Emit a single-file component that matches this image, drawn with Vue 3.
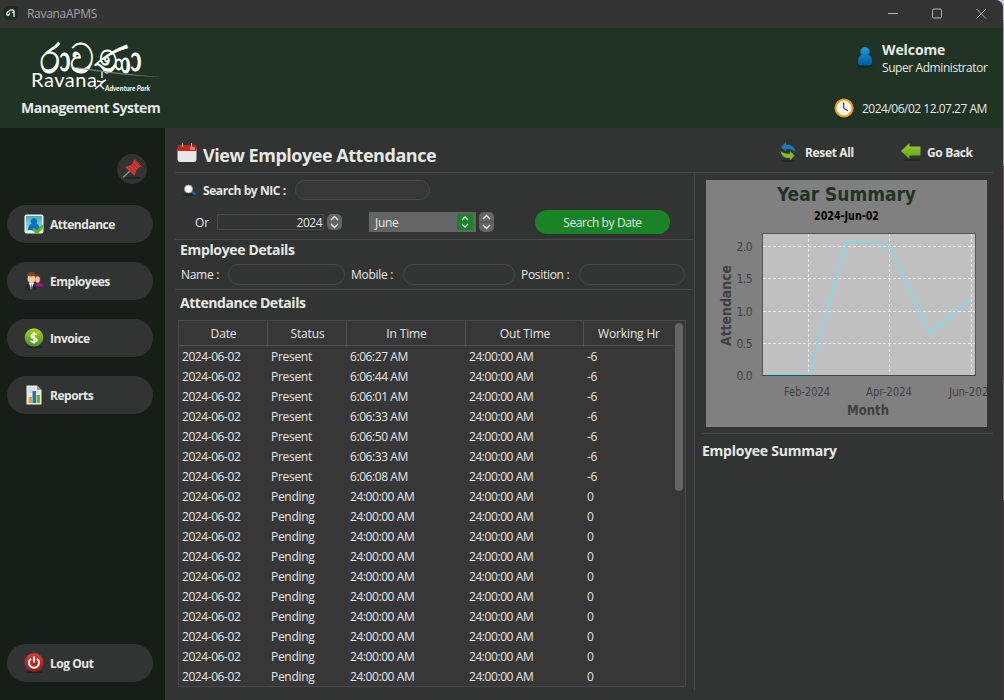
<script setup>
const nav = [
  { label: 'Attendance', icon: 'attendance' },
  { label: 'Employees', icon: 'employees' },
  { label: 'Invoice', icon: 'invoice' },
  { label: 'Reports', icon: 'reports' }
]
const columns = ['Date', 'Status', 'In Time', 'Out Time', 'Working Hr']
const present = ['6:06:27 AM', '6:06:44 AM', '6:06:01 AM', '6:06:33 AM', '6:06:50 AM', '6:06:33 AM', '6:06:08 AM']
const rows = [
  ...present.map((t) => ['2024-06-02', 'Present', t, '24:00:00 AM', '-6']),
  ...Array.from({ length: 10 }, () => ['2024-06-02', 'Pending', '24:00:00 AM', '24:00:00 AM', '0'])
]
const yTicks = [
  { label: '2.0', y: 66 }, { label: '1.5', y: 98 }, { label: '1.0', y: 131 }, { label: '0.5', y: 163 }, { label: '0.0', y: 195 }
]
const xTicks = [
  { label: 'Feb-2024', line: 102.5, x: 78 }, { label: 'Apr-2024', line: 183.5, x: 160 }, { label: 'Jun-2024', line: 265.5, x: 243 }
]
</script>

<template>
  <div class="desktop">
    <div class="window">
      <header class="titlebar">
        <svg class="app-icon" width="14" height="14" viewBox="0 0 14 14">
          <rect width="14" height="14" rx="4" fill="#17301f" />
          <path d="M6.500 4.500C4 5 2 7 3 8.700C4.500 10 6.500 7.500 5.200 6.700M5 4.500C7.500 3.500 9.500 3.500 10 5V11M8 6.500L10 6" fill="none" stroke="#fff" stroke-width="1.200" />
        </svg>
        <span class="app-name">RavanaAPMS</span>
        <svg class="win-controls" width="100" height="14" viewBox="0 0 100 14" fill="none" stroke="#b5b5b5">
          <path d="M0 6.500H10" />
          <rect x="44.500" y="2" width="9" height="9" rx="1.500" />
          <path d="M88.500 2L98 11.500M98 2L88.500 11.500" />
        </svg>
      </header>

      <section class="banner">
        <div class="brand">
          <svg class="brand-mark" width="140" height="60" viewBox="0 0 140 60">
            <text class="sinhala" x="19" y="37" textLength="101" lengthAdjust="spacingAndGlyphs">රාවණා</text>
            <path d="M48 30Q80 38 140 41Q90 37 48 30Z" fill="#819386" />
            <path d="M81 36V42" fill="none" stroke="#fff" stroke-width="1.300" />
            <path d="M84 44L79 49L74 53M76 45L81 46L85 44M79 49L83 53" fill="none" stroke="#fff" stroke-width="1.500" />
            <text class="ravana" x="10" y="51" textLength="66">Ravana</text>
            <text class="park" x="84" y="55" textLength="45" lengthAdjust="spacingAndGlyphs">Adventure Park</text>
          </svg>
          <h1>Management System</h1>
        </div>
        <div class="session">
          <div class="user">
            <svg width="16" height="22" viewBox="0 0 16 22">
              <defs><linearGradient id="usr" x1="0" y1="0" x2="0" y2="1"><stop offset="0" stop-color="#12a0e2" /><stop offset="1" stop-color="#0358a0" /></linearGradient></defs>
              <ellipse cx="8" cy="20" rx="8" ry="1.500" fill="#13251a" />
              <path d="M8 1A4.600 4.600 0 0 0 4.500 8.700C2 10 1 12 1 16Q1 19.500 4 19.500H12Q15 19.500 15 16C15 12 14 10 11.500 8.700A4.600 4.600 0 0 0 8 1Z" fill="url(#usr)" />
            </svg>
            <div class="who"><strong>Welcome</strong><span>Super Administrator</span></div>
          </div>
          <div class="clock">
            <svg width="20" height="21" viewBox="0 0 20 21">
              <ellipse cx="10" cy="19.500" rx="7" ry="1.200" fill="#15251a" />
              <circle cx="10" cy="10" r="8.500" fill="#f7f7f5" stroke="#f39a12" stroke-width="2" />
              <circle cx="10" cy="10" r="7" fill="none" stroke="#ffe7b0" stroke-width=".7" />
              <path d="M9.700 4.500V10.200L14 12.800" fill="none" stroke="#4a4a4a" stroke-width="1.300" />
            </svg>
            <span>2024/06/02 12.07.27 AM</span>
          </div>
        </div>
      </section>

      <div class="body">
        <aside class="sidebar">
          <div class="pin">
            <svg width="20" height="20" viewBox="0 0 20 20">
              <ellipse cx="11" cy="19" rx="8" ry="1" fill="#222" />
              <path d="M8 12L1 18.500" stroke="#8d9292" stroke-width="1.300" />
              <path d="M12 0L19.500 7L17 8.500L14.500 11L12.500 16.500L3 8L9 6L11.500 3Z" fill="#d23a34" />
              <path d="M9 6L14.500 11M6 7.500L13 14M12.500 2L18 7M10.500 4L16 9.500" stroke="#9b2222" stroke-width=".8" />
            </svg>
          </div>
          <nav>
            <button v-for="n in nav" :key="n.label" class="pill">
              <svg v-if="n.icon === 'attendance'" width="20" height="20" viewBox="0 0 20 20">
                <defs><linearGradient id="att" x1="0" y1="0" x2="0" y2="1"><stop offset="0" stop-color="#49a9b8" /><stop offset="1" stop-color="#a5e3ee" /></linearGradient></defs>
                <rect x=".5" y=".5" width="19" height="19" rx="2" fill="#eee" />
                <rect x="2" y="2" width="16" height="15" fill="url(#att)" />
                <path d="M10 4A3.300 3.300 0 0 0 7.500 9.500Q4 11 4 16H16Q16 11 12.500 9.500A3.300 3.300 0 0 0 10 4Z" fill="#0874bd" />
                <path d="M9 15L13 18.500L19 11.500" fill="none" stroke="#62b51c" stroke-width="3" />
              </svg>
              <svg v-else-if="n.icon === 'employees'" width="20" height="20" viewBox="0 0 20 20">
                <path d="M11 17Q10 12 14 12Q19 12 19.500 15.500H13Z" fill="#a9118d" />
                <ellipse cx="14" cy="7.500" rx="3.300" ry="4.800" fill="#5a3520" />
                <ellipse cx="13.500" cy="8.500" rx="2.300" ry="3.300" fill="#f3c69f" />
                <path d="M1 19Q1 14 5 12H9Q13 14 13 19Z" fill="#292929" />
                <path d="M5 12L7 19L10 12Z" fill="#f4f4f4" /><path d="M7.300 12L6.500 17L7.500 19L8.500 17Z" fill="#168ac9" />
                <ellipse cx="7.500" cy="7.500" rx="4" ry="5" fill="#f5cba5" />
                <path d="M3.300 8Q2 1.500 6 1.500Q10 0 12 4L11.500 7.500L10.500 5Q6 6 4.300 4.800Z" fill="#7d472c" />
              </svg>
              <svg v-else-if="n.icon === 'invoice'" width="20" height="20" viewBox="0 0 20 20">
                <defs><linearGradient id="inv" x1="0" y1="0" x2="0" y2="1"><stop offset="0" stop-color="#a8d51b" /><stop offset="1" stop-color="#44902a" /></linearGradient></defs>
                <ellipse cx="10" cy="19" rx="9" ry="1" fill="#202020" />
                <circle cx="10" cy="9.500" r="9.300" fill="url(#inv)" />
                <text x="10" y="14.500" class="dollar">$</text>
              </svg>
              <svg v-else width="20" height="20" viewBox="0 0 20 20">
                <path d="M2.500 .5H13L17.500 5V19.500H2.500Z" fill="#e9e9e9" /><path d="M13 .5L17.500 5H13Z" fill="#999" />
                <path d="M5 3H11M5 5H11M5 7H15" stroke="#d1d1d1" />
                <rect x="4.500" y="12" width="3.500" height="6" fill="#f39a16" /><rect x="8.500" y="6" width="3.500" height="12" fill="#117bc4" /><rect x="12.500" y="10" width="3.500" height="8" fill="#76ad25" />
              </svg>
              <span>{{ n.label }}</span>
            </button>
          </nav>
          <button class="pill logout">
            <svg width="20" height="20" viewBox="0 0 20 20">
              <defs><linearGradient id="pwr" x1="0" y1="0" x2="0" y2="1"><stop offset="0" stop-color="#dc3c32" /><stop offset="1" stop-color="#981711" /></linearGradient></defs>
              <ellipse cx="10" cy="19" rx="9" ry="1" fill="#202020" />
              <circle cx="10" cy="9.500" r="9.500" fill="url(#pwr)" />
              <path d="M7 5.700A5 5 0 1 0 13 5.700M10 3.500V9.500" fill="none" stroke="#fff" stroke-width="2" />
            </svg>
            <span>Log Out</span>
          </button>
        </aside>

        <main>
          <div class="page-head">
            <svg class="cal" width="20" height="20" viewBox="0 0 20 20">
              <path d="M.5 6H19.500V16Q19.500 19 17 19H3Q.5 19 .5 16Z" fill="#e8e8e8" />
              <path d="M.5 8V5Q.5 2 3 2H17Q19.500 2 19.500 5V8Z" fill="#c5281f" />
              <path d="M5.500 0V4M14.500 0V4" stroke="#bbb" /><rect x="13" y="4" width="5" height="3" rx="1" fill="#e67a70" />
            </svg>
            <h2>View Employee Attendance</h2>
            <button class="act reset">
              <svg width="17" height="20" viewBox="0 0 17 20">
                <ellipse cx="8" cy="19" rx="8" ry="1" fill="#242525" />
                <path d="M6 0V2.500Q14 2 15.500 10Q12 6.500 6 7V9.500L1 5Z" fill="#167bbd" />
                <path d="M10 18.500V16Q2 17 .5 9Q4 12.500 10 11.500V9L14.500 13.500Z" fill="#83bd25" />
              </svg><span>Reset All</span>
            </button>
            <button class="act back">
              <svg width="20" height="18" viewBox="0 0 20 18">
                <defs><linearGradient id="bk" x1="0" y1="0" x2="0" y2="1"><stop offset="0" stop-color="#9fce30" /><stop offset="1" stop-color="#5ba515" /></linearGradient></defs>
                <ellipse cx="11" cy="17" rx="9" ry="1" fill="#242525" />
                <path d="M0 8L8.500 0V3.500H19.500V12.500H8.500V16Z" fill="url(#bk)" />
              </svg><span>Go Back</span>
            </button>
          </div>

          <div class="columns">
            <section class="left">
              <div class="filters">
                <div class="nic">
                  <svg width="14" height="12" viewBox="0 0 14 12">
                    <ellipse cx="6" cy="10.700" rx="6" ry="1" fill="#232424" />
                    <path d="M8 7L12.500 10.500" stroke="#1763a8" stroke-width="2.400" /><circle cx="5.500" cy="5" r="4" fill="#f5f5f5" stroke="#9aa0a2" stroke-width=".8" />
                  </svg>
                  <strong>Search by NIC :</strong><div class="field nic-field"></div>
                </div>
                <div class="by-date">
                  <span class="or">Or</span>
                  <div class="year"><span>2024</span></div>
                  <svg class="spin" width="15" height="16" viewBox="0 0 15 16"><rect width="15" height="16" rx="5" fill="#646464" /><path d="M4 6L7.500 2.500L11 6M4 10L7.500 13.500L11 10" /></svg>
                  <div class="month"><span>June</span>
                    <svg width="16" height="16" viewBox="0 0 16 16"><rect width="16" height="16" fill="#198426" /><path d="M5 6L8 3L11 6M5 10L8 13L11 10" /></svg>
                  </div>
                  <svg class="spin2" width="15" height="20" viewBox="0 0 15 20"><rect width="15" height="20" rx="5" fill="#646464" /><path d="M0 10H15" class="split" /><path d="M4 7L7.500 3.500L11 7M4 13L7.500 16.500L11 13" /></svg>
                  <button class="go"><span>Search by Date</span></button>
                </div>
              </div>
              <div class="details">
                <h3>Employee Details</h3>
                <div class="info">
                  <span class="t-name">Name :</span><div class="field f-name"></div>
                  <span class="t-mobile">Mobile :</span><div class="field f-mobile"></div>
                  <span class="t-pos">Position :</span><div class="field f-pos"></div>
                </div>
              </div>
              <h3 class="h-att">Attendance Details</h3>
              <div class="table">
                <div class="thead"><span v-for="c in columns" :key="c">{{ c }}</span></div>
                <div class="scroll"><div class="thumb"></div></div>
                <div class="tbody">
                  <div v-for="(r, i) in rows" :key="i" class="tr"><span v-for="(c, j) in r" :key="j">{{ c }}</span></div>
                </div>
              </div>
            </section>

            <section class="right">
              <svg class="chart" width="281" height="247" viewBox="0 0 281 247">
                <rect width="281" height="247" fill="#808080" />
                <text class="c-title" x="71" y="21" textLength="139" lengthAdjust="spacingAndGlyphs">Year Summary</text>
                <text class="c-sub" x="108" y="40" textLength="65" lengthAdjust="spacingAndGlyphs">2024-Jun-02</text>
                <rect x="56.500" y="53.500" width="213" height="142" fill="#c0c0c0" stroke="#555" />
                <g class="grid">
                  <path v-for="t in yTicks.slice(0, 4)" :key="t.label" :d="`M57 ${t.y + 0.5}H269`" />
                  <path v-for="t in xTicks" :key="t.label" :d="`M${t.line} 54V195`" />
                </g>
                <path d="M59 194.500H103L141 60L183 65.500L224 153L265 119" fill="none" stroke="#5fe9f8" stroke-width="1.100" />
                <path d="M56 195.500H270" stroke="#444" />
                <text v-for="t in yTicks" :key="t.label" class="tick" x="30.500" :y="t.y + 5" textLength="16">{{ t.label }}</text>
                <text v-for="t in xTicks" :key="t.label" class="tick" :x="t.x" y="216" textLength="46" lengthAdjust="spacingAndGlyphs">{{ t.label }}</text>
                <text class="axis" x="141" y="235" textLength="42" lengthAdjust="spacingAndGlyphs">Month</text>
                <text class="axis" transform="translate(25 166) rotate(-90)" textLength="81" lengthAdjust="spacingAndGlyphs">Attendance</text>
              </svg>
              <h3 class="h-sum">Employee Summary</h3>
            </section>
          </div>
        </main>
      </div>
    </div>
  </div>
</template>

<style>
html, body { margin: 0; background: #323433; overflow: hidden; }
</style>

<style scoped>
* { box-sizing: border-box; }
.desktop { width: 1004px; height: 700px; background: linear-gradient(#c8c8e4 0 20px, #9c9da5 20px 166px, #78543f 166px 230px, #6c5965 230px 380px, #91604f 380px 500px, #453a38 500px); font-family: "Open Sans", "Noto Sans", sans-serif; font-size: 12px; color: #e6e8e6; line-height: 20px; overflow: hidden; white-space: nowrap; }
.window { width: 1003px; height: 700px; display: flex; flex-direction: column; background: #323433; border-top-right-radius: 8px; overflow: hidden; }
h1, h2, h3 { margin: 0; font-weight: 700; }
button { border: 0; padding: 0; background: none; font: inherit; color: inherit; display: flex; align-items: center; }
svg { display: block; flex: none; }
.titlebar { height: 28px; flex: none; background: #333433; display: flex; align-items: center; padding: 0 15px 0 4px; }
.app-icon { margin-top: -2px; }
.app-name { margin-left: 9px; color: #a3a4a3; letter-spacing: -.3px; }
.win-controls { margin-left: auto; }
.banner { height: 100px; flex: none; background: #203324; display: flex; justify-content: space-between; }
.brand { padding: 8px 0 0 21px; }
.sinhala { font-size: 41px; fill: #fff; stroke: #fff; stroke-width: .9px; }
.ravana { font: 20px Lato, sans-serif; fill: #fff; }
.park { font: italic 700 7px Lato, sans-serif; fill: #fff; }
h1 { font-size: 14px; line-height: 24px; letter-spacing: -.47px; }
.session { padding: 16px 16px 0 0; width: 171px; }
.user { display: flex; gap: 9px; padding-left: 25px; }
.user svg { margin-top: 2px; }
.who { display: flex; flex-direction: column; line-height: 18px; letter-spacing: -.42px; }
.who strong { font-size: 14px; line-height: 14px; margin: -1px 0 2px; letter-spacing: -.1px; }
.clock { display: flex; align-items: center; gap: 8px; margin: 21px 0 0 2px; letter-spacing: -.5px; }
.clock span { padding-top: 1px; }
.body { flex: 1; display: flex; }
.sidebar { width: 165px; background: #161e17; display: flex; flex-direction: column; padding: 26px 12px 18px 7px; }
.pin { width: 30px; height: 30px; border-radius: 50%; background: #323433; align-self: flex-end; margin-right: 6px; display: flex; align-items: center; justify-content: center; }
nav { display: flex; flex-direction: column; gap: 19px; margin-top: 21px; }
.pill { width: 146px; height: 38px; border-radius: 19px; background: #323433; padding-left: 17px; gap: 6px; font-weight: 700; }
.pill span { letter-spacing: -.48px; padding-top: 2px; }
.logout { margin-top: auto; }
.dollar { font: 700 14px "Open Sans", sans-serif; fill: #fff; text-anchor: middle; }
main { flex: 1; padding: 0 11px 0 10px; }
.page-head { height: 45px; border-bottom: 1px solid #484a49; display: flex; align-items: center; padding: 9px 19px 0 2px; }
.cal { margin-right: 6px; margin-top: -3px; }
h2 { font-size: 18px; letter-spacing: -.47px; line-height: 28px; flex: 1; }
.act { font-weight: 700; gap: 8px; margin-top: -6px; letter-spacing: -.35px; }
.act span { padding-top: 2px; }
.reset { width: 121px; }
.back { width: 73px; gap: 6px; }
.columns { display: flex; height: 527px; }
.left { width: 520px; height: 516px; margin-top: 1px; border-right: 1px solid #484a49; padding-right: 1px; }
.filters { height: 66px; border-bottom: 1px solid #484a49; padding-top: 6px; }
.nic { display: flex; align-items: center; height: 20px; padding-left: 8px; }
.nic strong { width: 92px; margin-left: 6px; padding-top: 2px; letter-spacing: -.42px; }
.field { height: 21px; border: 1px solid #484a49; border-radius: 11px; }
.nic-field { width: 135px; height: 20px; background: #373737; }
.by-date { display: flex; align-items: center; height: 24px; margin-top: 10px; padding-left: 20px; }
.or { width: 22px; padding-top: 2px; }
.year { width: 107px; height: 16px; border: 1px solid #484a49; line-height: 16px; text-align: right; padding-right: 1px; letter-spacing: -.5px; }
.spin { margin-left: 3px; }
.by-date svg path { fill: none; stroke: #eee; stroke-width: 1.400; }
.by-date svg .split { stroke: #555; stroke-width: 1; }
.month { width: 107px; height: 20px; margin-left: 27px; background: #646464; display: flex; align-items: center; justify-content: space-between; padding: 0 3px 0 6px; letter-spacing: -.3px; }
.month span, .go span { padding-top: 2px; }
.spin2 { margin-left: 3px; }
.go { width: 135px; height: 24px; border-radius: 12px; background: #198426; margin-left: 41px; justify-content: center; letter-spacing: -.4px; }
.details { height: 50px; border-bottom: 1px solid #484a49; }
h3 { font-size: 14px; letter-spacing: -.35px; line-height: 20px; padding-left: 5px; }
.info { display: flex; align-items: center; height: 21px; margin-top: 4px; padding-left: 6px; letter-spacing: -.3px; }
.t-name { width: 47px; } .f-name { width: 117px; }
.t-mobile { width: 52px; margin-left: 6px; } .f-mobile { width: 112px; }
.t-pos { width: 58px; margin-left: 6px; } .f-pos { width: 106px; }
.h-att { margin-top: 3px; letter-spacing: -.45px; }
.table { position: relative; width: 508px; height: 367px; margin: 7px 0 0 3px; border: 1px solid #484a49; background: #373737; letter-spacing: -.43px; }
.thead { display: grid; grid-template-columns: 89px 79px 119px 118px 89px; height: 25px; width: 494px; border-bottom: 1px solid #505250; text-align: center; line-height: 26px; letter-spacing: -.15px; }
.thead span { border-right: 1px solid #505250; padding-left: 1px; }
.thead span:last-child { border: 0; }
.tr { display: grid; grid-template-columns: 89px 79px 119px 118px 89px; height: 20px; line-height: 20px; }
.tr span { padding-left: 3px; }
.tr span:nth-child(2) { letter-spacing: -.3px; }
.tbody { padding-top: 1px; }
.scroll { position: absolute; right: 2px; top: 2px; width: 8px; height: 360px; }
.thumb { height: 168px; border-radius: 4px; background: #646464; }
.right { width: 298px; padding-left: 7px; }
.chart { margin: 7px 0 0 4px; }
.h-sum { border-top: 1px solid #484a49; margin-top: 6px; padding: 7px 0 0; letter-spacing: -.25px; }
.c-title { font: 700 20px "DejaVu Sans Condensed", "DejaVu Sans", sans-serif; fill: #203324; }
.c-sub { font: 700 12px "DejaVu Sans Condensed", sans-serif; fill: #000; }
.grid path { stroke: #e8e8e8; stroke-dasharray: 3 2; fill: none; }
.tick { font: 12px "DejaVu Sans Condensed", sans-serif; fill: #404040; }
.axis { font: 700 14px "DejaVu Sans Condensed", sans-serif; fill: #404040; }
</style>
